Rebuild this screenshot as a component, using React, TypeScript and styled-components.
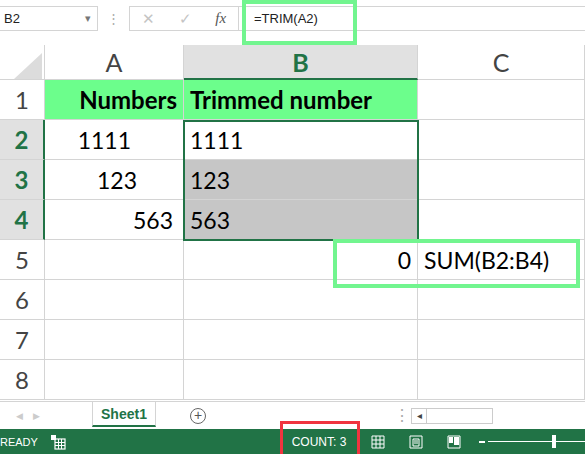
import React from 'react'
import styled, { createGlobalStyle } from 'styled-components'

const Global = createGlobalStyle`
  html, body { margin: 0; padding: 0; background: #fff; }
  body { font-family: Lato, "Open Sans", sans-serif; width: 585px; height: 454px; overflow: hidden; }
`

const colWidths = '45px 139px 234px 167px'

const rows = [
  { n: 1, a: 'Numbers', b: 'Trimmed number', header: true },
  { n: 2, a: '1111', aPad: 52, b: '1111', sel: true },
  { n: 3, a: '123', aPad: 46, b: '123', sel: true, grey: true },
  { n: 4, a: '563', aPad: 10, b: '563', sel: true, grey: true },
  { n: 5, a: '', b: '0', bRight: true, c: 'SUM(B2:B4)' },
  { n: 6, a: '', b: '' },
  { n: 7, a: '', b: '' },
  { n: 8, a: '', b: '' },
]

const App = () => (
  <Page>
    <Global />
    <FormulaBar>
      <NameBox>
        B2
        <Caret>▾</Caret>
      </NameBox>
      <Dots>⋮</Dots>
      <FxBox>
        <FxIcon>✕</FxIcon>
        <FxIcon>✓</FxIcon>
        <FxIcon italic>fx</FxIcon>
      </FxBox>
      <Formula>=TRIM(A2)</Formula>
      <Highlight style={{ left: 242, top: 0, width: 115, height: 45 }} />
    </FormulaBar>
    <Gap />
    <Sheet>
      <Corner>
        <svg width="36" height="30" viewBox="0 0 36 30">
          <polygon points="34,4 34,30 6,30" fill="#dcdcdc" />
        </svg>
      </Corner>
      <ColHead>A</ColHead>
      <ColHead active>B</ColHead>
      <ColHead>C</ColHead>
      {rows.map((r) => (
        <React.Fragment key={r.n}>
          <RowHead active={!!r.sel}>{r.n}</RowHead>
          <Cell header={r.header} align="right" style={r.aPad ? { paddingRight: r.aPad } : undefined}>
            {r.header ? <Bold>{r.a}</Bold> : r.a}
          </Cell>
          <Cell header={r.header} grey={r.grey} align={r.bRight ? 'right' : 'left'}>
            {r.header ? <Bold>{r.b}</Bold> : r.b}
          </Cell>
          <Cell align="left">{r.c || ''}</Cell>
        </React.Fragment>
      ))}
      <Selection />
      <Highlight style={{ left: 333, top: 194, width: 247, height: 49 }} />
    </Sheet>
    <TabBar>
      <Arrows>◀&nbsp;&nbsp;&nbsp;&nbsp;▶</Arrows>
      <Tab>Sheet1</Tab>
      <AddBtn>+</AddBtn>
      <TabSpacer />
      <Dots small>⋮</Dots>
      <ScrollTrack>
        <ScrollArrow>◂</ScrollArrow>
      </ScrollTrack>
    </TabBar>
    <StatusBar>
      <Ready>READY</Ready>
      <svg width="16" height="16" viewBox="0 0 16 16" style={{ marginLeft: 12 }}>
        <rect x="1" y="1" width="5" height="5" fill="#fff" />
        <rect x="5" y="5" width="10" height="10" fill="none" stroke="#fff" strokeWidth="1.2" />
        <path d="M5 8.5h10M5 11.5h10M8.5 5v10M11.5 5v10" stroke="#fff" strokeWidth="1" />
      </svg>
      <Spacer />
      <Count>COUNT: 3</Count>
      <ViewIcons>
        <svg width="14" height="14" viewBox="0 0 14 14">
          <path d="M1 1h12v12H1zM1 5h12M1 9h12M5 1v12M9 1v12" fill="none" stroke="#fff" />
        </svg>
        <svg width="14" height="14" viewBox="0 0 14 14">
          <path d="M1 1h12v12H1zM4 4h6v7H4zM5 6h4M5 8h4" fill="none" stroke="#fff" />
        </svg>
        <svg width="14" height="14" viewBox="0 0 14 14">
          <path d="M1 1h12v12H1z" fill="none" stroke="#fff" />
          <rect x="2" y="2" width="4" height="6" fill="#fff" />
          <rect x="7" y="2" width="5" height="8" fill="#fff" />
        </svg>
      </ViewIcons>
      <Zoom>
        <ZoomMinus />
        <ZoomLine>
          <ZoomThumb />
        </ZoomLine>
      </Zoom>
    </StatusBar>
    <CountFrame />
  </Page>
)

export default App

const Page = styled.div`
  width: 585px;
  height: 454px;
  display: flex;
  flex-direction: column;
  position: relative;
  background: #fff;
`

const FormulaBar = styled.div`
  height: 37px;
  display: flex;
  align-items: center;
  position: relative;
  font-family: "Liberation Sans", Arial, sans-serif;
  font-size: 13px;
  color: #222;
`

const NameBox = styled.div`
  width: 98px;
  height: 25px;
  border: 1px solid #d4d4d4;
  border-left: none;
  display: flex;
  align-items: center;
  justify-content: space-between;
  padding-left: 4px;
  padding-right: 6px;
  box-sizing: border-box;
`

const Caret = styled.span`
  color: #777;
  font-size: 11px;
`

const Dots = styled.span<{ small?: boolean }>`
  color: #aaa;
  width: ${(p) => (p.small ? '18px' : '31px')};
  text-align: center;
`

const FxBox = styled.div`
  width: 110px;
  height: 25px;
  border: 1px solid #d4d4d4;
  display: flex;
  align-items: center;
  justify-content: space-around;
  box-sizing: border-box;
`

const FxIcon = styled.span<{ italic?: boolean }>`
  color: ${(p) => (p.italic ? '#555' : '#c4c4c4')};
  font-style: ${(p) => (p.italic ? 'italic' : 'normal')};
  font-family: ${(p) => (p.italic ? '"Liberation Serif", serif' : 'inherit')};
  font-size: 15px;
`

const Formula = styled.div`
  flex: 1;
  height: 25px;
  border-top: 1px solid #d4d4d4;
  border-bottom: 1px solid #d4d4d4;
  display: flex;
  align-items: center;
  padding-left: 15px;
  box-sizing: border-box;
`

const Highlight = styled.div`
  position: absolute;
  border: 4px solid #72f58f;
  box-sizing: border-box;
  pointer-events: none;
`

const Gap = styled.div`
  height: 8px;
`

const Sheet = styled.div`
  display: grid;
  grid-template-columns: ${colWidths};
  grid-template-rows: 35px repeat(8, 40px);
  position: relative;
  font-size: 23px;
  color: #000;
`

const Corner = styled.div`
  background: #fff;
  border-right: 1px solid #d4d4d4;
  border-bottom: 1px solid #d4d4d4;
  display: flex;
  align-items: flex-end;
  justify-content: flex-end;
`

const ColHead = styled.div<{ active?: boolean }>`
  display: flex;
  align-items: center;
  justify-content: center;
  font-size: 25px;
  color: ${(p) => (p.active ? '#217346' : '#444')};
  font-weight: ${(p) => (p.active ? 700 : 400)};
  background: ${(p) => (p.active ? '#e1e1e1' : '#fff')};
  border-right: 1px solid #d4d4d4;
  border-bottom: ${(p) => (p.active ? '2px solid #217346' : '1px solid #d4d4d4')};
`

const RowHead = styled.div<{ active: boolean }>`
  display: flex;
  align-items: center;
  justify-content: center;
  font-size: 24px;
  color: ${(p) => (p.active ? '#217346' : '#444')};
  font-weight: ${(p) => (p.active ? 700 : 400)};
  background: ${(p) => (p.active ? '#e1e1e1' : '#fff')};
  border-right: ${(p) => (p.active ? '2px solid #217346' : '1px solid #d4d4d4')};
  border-bottom: 1px solid #d4d4d4;
`

const Cell = styled.div<{ header?: boolean; grey?: boolean; align: 'left' | 'right' }>`
  display: flex;
  align-items: center;
  justify-content: ${(p) => (p.align === 'right' ? 'flex-end' : 'flex-start')};
  padding: 0 6px;
  white-space: nowrap;
  background: ${(p) => (p.header ? '#6cfe8c' : p.grey ? '#c6c6c6' : '#fff')};
  border-right: 1px solid #d4d4d4;
  border-bottom: 1px solid #d4d4d4;
`

const Bold = styled.span`
  font-weight: 700;
  font-size: 24px;
`

const Selection = styled.div`
  position: absolute;
  left: 183px;
  top: 75px;
  width: 236px;
  height: 121px;
  border: 2px solid #217346;
  box-sizing: border-box;
  pointer-events: none;
`

const TabBar = styled.div`
  height: 27px;
  display: flex;
  align-items: center;
  border-top: 1px solid #d4d4d4;
  font-family: "Liberation Sans", Arial, sans-serif;
  background: #fff;
  margin-top: auto;
`

const Arrows = styled.span`
  color: #ccc;
  font-size: 9px;
  padding-left: 16px;
  width: 76px;
`

const Tab = styled.div`
  width: 64px;
  height: 25px;
  margin-top: -2px;
  display: flex;
  align-items: center;
  justify-content: center;
  color: #217346;
  font-weight: 700;
  font-size: 14px;
  border: 1px solid #d4d4d4;
  border-top: none;
  border-bottom: 2px solid #217346;
  box-sizing: border-box;
`

const AddBtn = styled.div`
  width: 14px;
  height: 14px;
  margin-left: 34px;
  border: 1px solid #666;
  border-radius: 50%;
  color: #555;
  font-size: 14px;
  line-height: 13px;
  text-align: center;
`

const TabSpacer = styled.div`
  flex: 1;
`

const ScrollTrack = styled.div`
  width: 80px;
  height: 14px;
  border: 1px solid #ccc;
  margin-right: 92px;
  display: flex;
`

const ScrollArrow = styled.span`
  width: 14px;
  border-right: 1px solid #ccc;
  font-size: 10px;
  line-height: 14px;
  text-align: center;
  color: #444;
`

const StatusBar = styled.div`
  height: 25px;
  background: #217346;
  display: flex;
  align-items: center;
  color: #fff;
  font-family: "Liberation Sans", Arial, sans-serif;
  font-size: 11px;
`

const Ready = styled.span`
  margin-left: 0;
`

const Spacer = styled.div`
  flex: 1;
`

const Count = styled.div`
  width: 80px;
  text-align: center;
  margin-right: 10px;
  font-size: 12px;
`

const CountFrame = styled.div`
  position: absolute;
  left: 280px;
  top: 421px;
  width: 80px;
  height: 33px;
  border: 3px solid #f0343f;
  border-bottom: none;
  box-sizing: border-box;
  pointer-events: none;
`

const ViewIcons = styled.div`
  display: flex;
  gap: 24px;
  padding-left: 2px;
  margin-right: 18px;
`

const Zoom = styled.div`
  display: flex;
  align-items: center;
  width: 106px;
`

const ZoomMinus = styled.div`
  width: 6px;
  height: 2px;
  background: #fff;
  margin-right: 3px;
`

const ZoomLine = styled.div`
  flex: 1;
  height: 1px;
  background: #fff;
  position: relative;
`

const ZoomThumb = styled.div`
  position: absolute;
  left: 64px;
  top: -6px;
  width: 4px;
  height: 13px;
  background: #fff;
`
